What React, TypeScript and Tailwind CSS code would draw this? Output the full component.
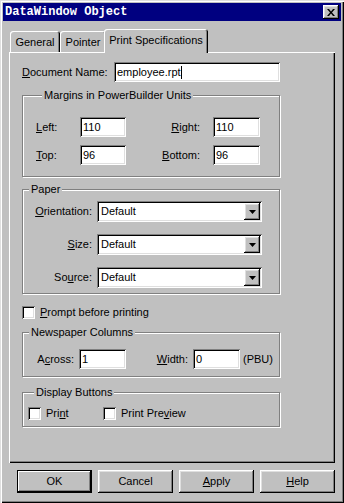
import React from "react";

const raised =
  "shadow-[inset_-1px_-1px_0_#000,inset_1px_1px_0_#fff,inset_-2px_-2px_0_#808080,inset_2px_2px_0_#dfdfdf]";
const sunken =
  "shadow-[inset_1px_1px_0_#808080,inset_-1px_-1px_0_#fff,inset_2px_2px_0_#000,inset_-2px_-2px_0_#dfdfdf]";

function Mn({ children }: { children: React.ReactNode }) {
  return <span className="underline underline-offset-[1px]">{children}</span>;
}

function Edit({ value, w, caret }: { value: string; w: string; caret?: boolean }) {
  return (
    <div className={`${w} h-[20px] bg-white ${sunken} flex items-center pl-[3px]`}>
      <span>{value}</span>
      {caret && <span className="w-px h-[13px] bg-black" />}
    </div>
  );
}

function Combo() {
  return (
    <div className={`w-[165px] h-[21px] bg-white ${sunken} flex items-center p-[2px]`}>
      <span className="flex-1 pl-[2px]">Default</span>
      <div className={`w-[16px] h-[17px] bg-[#c0c0c0] ${raised} flex items-center justify-center`}>
        <svg width="7" height="4" viewBox="0 0 7 4">
          <path d="M0 0h7L3.5 4z" fill="#000" />
        </svg>
      </div>
    </div>
  );
}

function Check({ label }: { label: React.ReactNode }) {
  return (
    <div className="flex items-center gap-[5px]">
      <div className={`w-[13px] h-[13px] bg-white ${sunken}`} />
      <span>{label}</span>
    </div>
  );
}

function Group({
  title,
  className,
  children,
}: {
  title: string;
  className?: string;
  children: React.ReactNode;
}) {
  return (
    <fieldset
      className={`w-[258px] border border-[#808080] shadow-[1px_1px_0_#fff,inset_1px_1px_0_#fff] ${className ?? ""}`}
    >
      <legend className="ml-[6px] px-[2px] leading-[13px] bg-[#c0c0c0]">{title}</legend>
      {children}
    </fieldset>
  );
}

function Button({ children, def }: { children: React.ReactNode; def?: boolean }) {
  return (
    <div
      className={`w-[75px] h-[23px] flex items-center justify-center ${
        def
          ? "border border-black shadow-[inset_-1px_-1px_0_#000,inset_1px_1px_0_#fff,inset_-2px_-2px_0_#808080]"
          : raised
      }`}
    >
      {children}
    </div>
  );
}

export default function App() {
  return (
    <div
      className={`w-[344px] h-[503px] bg-[#c0c0c0] p-[3px] flex flex-col text-[11px] leading-[13px] text-black font-['Liberation_Sans',Arial,sans-serif] shadow-[inset_1px_1px_0_#dfdfdf,inset_2px_2px_0_#fff,inset_-1px_-1px_0_#000,inset_-2px_-2px_0_#808080]`}
    >
      {/* title bar */}
      <div className="h-[18px] bg-[#000080] flex items-center justify-between pl-[2px] pr-[2px]">
        <span className="text-white font-bold font-['Liberation_Mono',monospace] text-[12px]">
          DataWindow Object
        </span>
        <div className={`w-[16px] h-[14px] bg-[#c0c0c0] ${raised} flex items-center justify-center`}>
          <svg width="8" height="7" viewBox="0 0 8 7">
            <path d="M0 0h2l2 2.5L6 0h2L5 3.5 8 7H6L4 4.5 2 7H0l3-3.5z" fill="#000" />
          </svg>
        </div>
      </div>

      <div className="px-[6px] pt-[8px]">
        {/* tabs */}
        <div className="flex items-end h-[23px]">
          <div className="ml-[1px] w-[50px] h-[21px] rounded-t-[3px] shadow-[inset_1px_1px_0_#fff,inset_-1px_0_0_#000,inset_-2px_0_0_#808080] flex items-center justify-center pt-[1px]">
            General
          </div>
          <div className="w-[46px] h-[21px] rounded-t-[3px] shadow-[inset_1px_1px_0_#fff,inset_-1px_0_0_#000,inset_-2px_0_0_#808080] flex items-center justify-center pt-[1px]">
            Pointer
          </div>
          <div className="relative z-10 -ml-[2px] -mb-[1px] w-[104px] h-[24px] bg-[#c0c0c0] rounded-t-[3px] shadow-[inset_1px_1px_0_#fff,inset_-1px_0_0_#000,inset_-2px_0_0_#808080] flex items-center justify-center pb-[2px]">
            Print Specifications
          </div>
        </div>

        {/* panel */}
        <div
          className={`h-[411px] shadow-[inset_1px_1px_0_#fff,inset_-1px_-1px_0_#000,inset_-2px_-2px_0_#808080] pl-[13px] pt-[10px] flex flex-col`}
        >
          <div className="flex items-center">
            <span className="w-[92px]">
              <Mn>D</Mn>ocument Name:
            </span>
            <Edit value="employee.rpt" w="w-[166px]" caret />
          </div>

          <Group title="Margins in PowerBuilder Units" className="mt-[7px] pt-[15px] pb-[11px] pl-[13px]">
            <div className="grid grid-cols-[44px_46px_87px_47px] gap-y-[8px] items-center">
              <span>
                <Mn>L</Mn>eft:
              </span>
              <Edit value="110" w="w-[46px]" />
              <span className="text-right pr-[13px]">
                <Mn>R</Mn>ight:
              </span>
              <Edit value="110" w="w-[47px]" />
              <span>
                <Mn>T</Mn>op:
              </span>
              <Edit value="96" w="w-[46px]" />
              <span className="text-right pr-[13px]">
                <Mn>B</Mn>ottom:
              </span>
              <Edit value="96" w="w-[47px]" />
            </div>
          </Group>

          <Group title="Paper" className="mt-[6px] pt-[5px] pb-[5px]">
            <div className="grid grid-cols-[69px_165px] gap-x-[5px] gap-y-[12px] items-center">
              <span className="text-right">
                <Mn>O</Mn>rientation:
              </span>
              <Combo />
              <span className="text-right">
                <Mn>S</Mn>ize:
              </span>
              <Combo />
              <span className="text-right">
                So<Mn>u</Mn>rce:
              </span>
              <Combo />
            </div>
          </Group>

          <div className="mt-[12px]">
            <Check
              label={
                <>
                  <Mn>P</Mn>rompt before printing
                </>
              }
            />
          </div>

          <Group title="Newspaper Columns" className="mt-[7px] pt-[10px] pb-[7px]">
            <div className="flex items-center">
              <span className="w-[56px] text-right pr-[5px]">
                A<Mn>c</Mn>ross:
              </span>
              <Edit value="1" w="w-[47px]" />
              <span className="w-[67px] text-right pr-[5px]">
                <Mn>W</Mn>idth:
              </span>
              <Edit value="0" w="w-[47px]" />
              <span className="ml-[3px]">(PBU)</span>
            </div>
          </Group>

          <Group title="Display Buttons" className="mt-[9px] pt-[8px] pb-[6px] pl-[5px]">
            <div className="flex items-center">
              <div className="w-[75px]">
                <Check
                  label={
                    <>
                      Pri<Mn>n</Mn>t
                    </>
                  }
                />
              </div>
              <Check
                label={
                  <>
                    Print Pre<Mn>v</Mn>iew
                  </>
                }
              />
            </div>
          </Group>
        </div>
      </div>

      {/* buttons */}
      <div className="flex justify-end gap-[6px] pr-[6px] mt-[7px]">
        <Button def>OK</Button>
        <Button>Cancel</Button>
        <Button>
          <span>
            <Mn>A</Mn>pply
          </span>
        </Button>
        <Button>
          <span>
            <Mn>H</Mn>elp
          </span>
        </Button>
      </div>
    </div>
  );
}
